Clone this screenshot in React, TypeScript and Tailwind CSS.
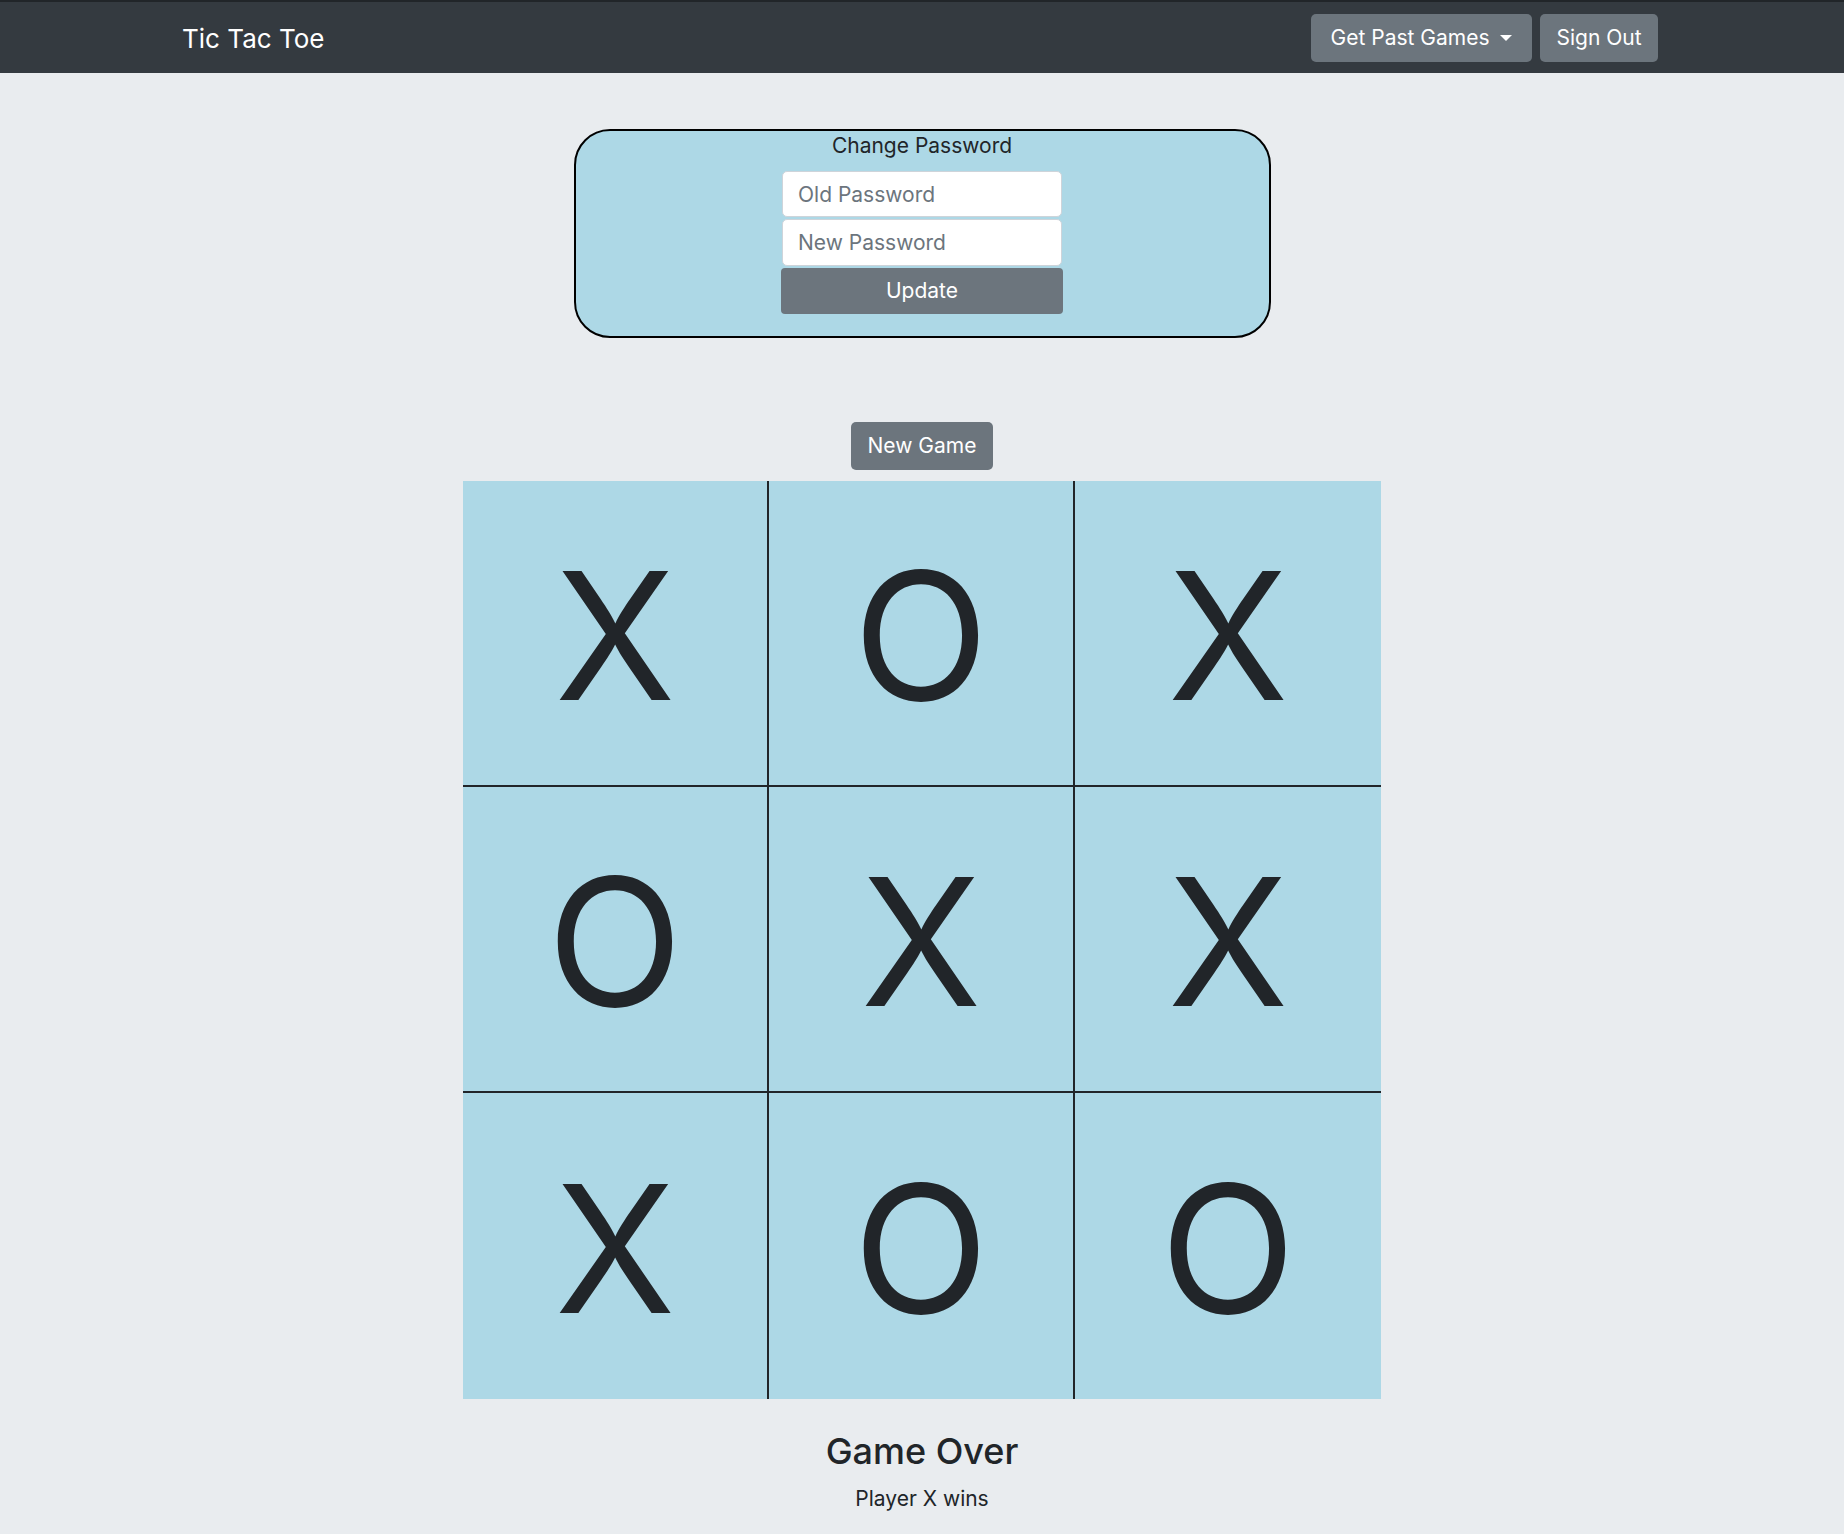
import { useState } from "react";

const font = { fontFamily: "Inter, 'Liberation Sans', sans-serif" };

const startBoard = ["X", "O", "X", "O", "X", "X", "X", "O", "O"];

function Navbar() {
  return (
    <nav className="h-[73px] bg-[#343a40] border-t-2 border-[#212529] flex items-center justify-between pl-[182px] pr-[186px]">
      <a href="#" className="text-white text-[26px] leading-none mt-[3px]">
        Tic Tac Toe
      </a>
      <div className="flex gap-[8px]">
        <button className="w-[221px] h-[48px] rounded-[5px] bg-[#6c757d] text-white text-[21px] flex items-center justify-center">
          Get Past Games
          <span className="ml-[11px] w-0 h-0 border-x-[6px] border-x-transparent border-t-[6px] border-t-white" />
        </button>
        <button className="w-[118px] h-[48px] rounded-[5px] bg-[#6c757d] text-white text-[21px]">
          Sign Out
        </button>
      </div>
    </nav>
  );
}

function ChangePassword() {
  return (
    <div className="w-[697px] mx-auto mt-[56px] bg-[#add8e6] border-2 border-black rounded-[36px] pb-[22px] flex flex-col items-center">
      <h3 className="text-[21px] leading-[30px] text-[#212529] mb-[10px]">Change Password</h3>
      <div className="flex flex-col gap-[2px] w-[282px]">
        <input
          placeholder="Old Password"
          className="h-[46px] mx-[1px] bg-white border border-[#ced4da] rounded-[5px] px-[15px] text-[21px] placeholder:text-[#6c757d] outline-none"
        />
        <input
          placeholder="New Password"
          className="h-[47px] mx-[1px] bg-white border border-[#ced4da] rounded-[5px] px-[15px] text-[21px] placeholder:text-[#6c757d] outline-none"
        />
        <button className="h-[46px] bg-[#6c757d] text-white text-[21px] rounded-[4px]">Update</button>
      </div>
    </div>
  );
}

function Board() {
  const [cells] = useState(startBoard);
  return (
    <div className="grid grid-cols-3 w-[918px] mx-auto mt-[11px]">
      {cells.map((v, i) => (
        <div
          key={i}
          className={`h-[306px] pt-[7px] bg-[#add8e6] flex items-center justify-center text-[#212529] text-[177px] leading-none ${
            i % 3 !== 2 ? "border-r-2 border-r-[#212529]" : ""
          } ${i < 6 ? "border-b-2 border-b-[#212529]" : ""}`}
        >
          {v}
        </div>
      ))}
    </div>
  );
}

export default function App() {
  return (
    <div className="min-h-screen bg-[#e9ecef]" style={font}>
      <Navbar />
      <ChangePassword />
      <div className="flex justify-center mt-[84px]">
        <button className="w-[142px] h-[48px] rounded-[5px] bg-[#6c757d] text-white text-[21px]">New Game</button>
      </div>
      <Board />
      <div className="text-center text-[#212529]">
        <h3 className="mt-[31px] text-[36px] leading-[42px] font-medium">Game Over</h3>
        <p className="mt-[12px] text-[21px] leading-[30px]">Player X wins</p>
      </div>
    </div>
  );
}
